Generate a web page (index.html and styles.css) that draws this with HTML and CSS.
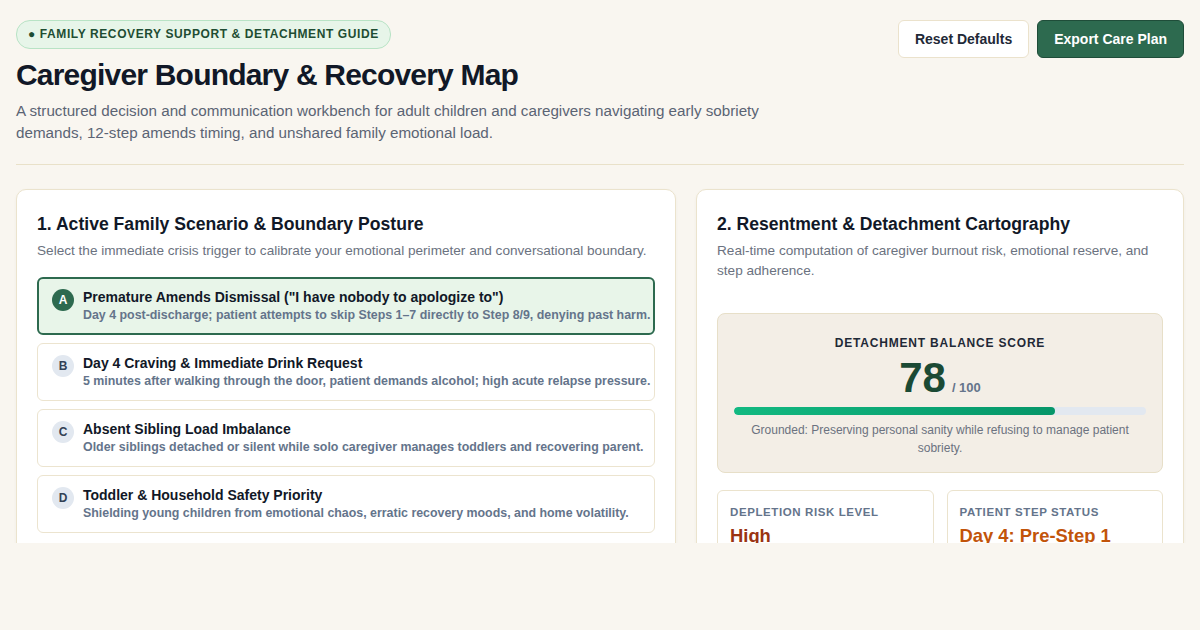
FILE: index.html
```html
<!DOCTYPE html>
<html lang="en">
<head>
<meta charset="utf-8">
<title>Caregiver Boundary & Recovery Map</title>
<link rel="stylesheet" href="styles.css">
</head>
<body>
<div class="page">
  <header class="header">
    <div class="header-main">
      <span class="badge">● FAMILY RECOVERY SUPPORT &amp; DETACHMENT GUIDE</span>
      <h1 class="title">Caregiver Boundary &amp; Recovery Map</h1>
      <p class="lede">A structured decision and communication workbench for adult children and caregivers navigating early sobriety demands, 12-step amends timing, and unshared family emotional load.</p>
    </div>
    <div class="actions">
      <button class="btn btn-light">Reset Defaults</button>
      <button class="btn btn-dark">Export Care Plan</button>
    </div>
  </header>

  <main class="grid">
    <section class="card">
      <h2 class="card-title">1. Active Family Scenario &amp; Boundary Posture</h2>
      <p class="card-sub">Select the immediate crisis trigger to calibrate your emotional perimeter and conversational boundary.</p>
      <div class="options">
        <div class="option selected">
          <span class="letter">A</span>
          <div class="opt-text">
            <div class="opt-title">Premature Amends Dismissal ("I have nobody to apologize to")</div>
            <div class="opt-desc">Day 4 post-discharge; patient attempts to skip Steps 1–7 directly to Step 8/9, denying past harm.</div>
          </div>
        </div>
        <div class="option">
          <span class="letter">B</span>
          <div class="opt-text">
            <div class="opt-title">Day 4 Craving &amp; Immediate Drink Request</div>
            <div class="opt-desc">5 minutes after walking through the door, patient demands alcohol; high acute relapse pressure.</div>
          </div>
        </div>
        <div class="option">
          <span class="letter">C</span>
          <div class="opt-text">
            <div class="opt-title">Absent Sibling Load Imbalance</div>
            <div class="opt-desc">Older siblings detached or silent while solo caregiver manages toddlers and recovering parent.</div>
          </div>
        </div>
        <div class="option">
          <span class="letter">D</span>
          <div class="opt-text">
            <div class="opt-title">Toddler &amp; Household Safety Priority</div>
            <div class="opt-desc">Shielding young children from emotional chaos, erratic recovery moods, and home volatility.</div>
          </div>
        </div>
      </div>
    </section>

    <section class="card">
      <h2 class="card-title">2. Resentment &amp; Detachment Cartography</h2>
      <p class="card-sub card-sub-wide">Real-time computation of caregiver burnout risk, emotional reserve, and step adherence.</p>
      <div class="score-box">
        <div class="score-label">DETACHMENT BALANCE SCORE</div>
        <div class="score-row"><span class="score-num">78</span><span class="score-max">/ 100</span></div>
        <div class="bar"><div class="bar-fill" style="width:78%"></div></div>
        <p class="score-note">Grounded: Preserving personal sanity while refusing to manage patient sobriety.</p>
      </div>
      <div class="stats">
        <div class="stat">
          <div class="stat-label">DEPLETION RISK LEVEL</div>
          <div class="stat-value risk">High</div>
        </div>
        <div class="stat">
          <div class="stat-label">PATIENT STEP STATUS</div>
          <div class="stat-value step">Day 4: Pre-Step 1</div>
        </div>
      </div>
    </section>
  </main>
</div>
</body>
</html>
```

FILE: styles.css
```css
* { box-sizing: border-box; }
html, body { margin: 0; padding: 0; }
body {
  background: #f9f6f0;
  font-family: "Liberation Sans", Arial, sans-serif;
  color: #111827;
}
.page {
  padding: 20px 16px 0;
  height: 543px;
  overflow: hidden;
}
.header {
  display: flex;
  justify-content: space-between;
  align-items: flex-start;
  padding-bottom: 20px;
  border-bottom: 1px solid #e9e1c9;
}
.header-main { max-width: 790px; }
.badge {
  display: inline-block;
  background: #e7f5e9;
  border: 1px solid #b8e3c5;
  color: #1e4d33;
  font-size: 12px;
  font-weight: 700;
  letter-spacing: 0.6px;
  padding: 6px 11px 7px 11px;
  border-radius: 14px;
  line-height: 14px;
}
.title {
  margin: 8px 0 7px;
  font-size: 30px;
  line-height: 36px;
  font-weight: 700;
  letter-spacing: -0.8px;
  color: #111827;
}
.lede {
  margin: 0;
  font-size: 15.2px;
  line-height: 22px;
  color: #5b6474;
}
.actions { display: flex; gap: 8px; }
.btn {
  font-family: inherit;
  font-size: 14px;
  font-weight: 700;
  height: 38px;
  padding: 0 16px;
  border-radius: 6px;
  cursor: pointer;
}
.btn-light {
  background: #ffffff;
  border: 1px solid #ebe2cc;
  color: #1f2937;
}
.btn-dark {
  background: #2d6a4f;
  border: 1px solid #1f4d39;
  color: #ffffff;
}
.grid {
  display: grid;
  grid-template-columns: 660px 1fr;
  gap: 20px;
  margin-top: 24px;
}
.card {
  background: #ffffff;
  border: 1px solid #ebe3cd;
  border-radius: 10px;
  padding: 22px 20px 20px;
  box-shadow: 0 1px 3px rgba(120, 100, 60, 0.06);
}
.card-title {
  margin: 0;
  font-size: 17.6px;
  line-height: 24px;
  font-weight: 700;
  color: #111827;
}
.card-sub {
  margin: 5px 0 16px;
  font-size: 13.6px;
  line-height: 20px;
  color: #6b7280;
}
.card-sub-wide { margin-bottom: 32px; }
.options { display: flex; flex-direction: column; gap: 8px; }
.option {
  display: flex;
  align-items: flex-start;
  gap: 9px;
  border: 1px solid #ece4cf;
  border-radius: 6px;
  padding: 10px 2px 10px 14px;
  background: #ffffff;
}
.option.selected {
  background: #e8f5e9;
  border: 2px solid #2d6a4f;
  padding: 9px 1px 9px 13px;
}
.letter {
  flex: none;
  width: 22px;
  height: 22px;
  border-radius: 50%;
  background: #e2e8f0;
  color: #334155;
  font-size: 12px;
  font-weight: 700;
  display: flex;
  align-items: center;
  justify-content: center;
  margin-top: 1px;
}
.selected .letter { background: #2d6a4f; color: #ffffff; }
.opt-text { min-width: 0; }
.opt-title {
  font-size: 14px;
  line-height: 18px;
  font-weight: 700;
  color: #111827;
  white-space: nowrap;
}
.opt-desc {
  font-size: 12.4px;
  line-height: 18px;
  font-weight: 700;
  color: #64748b;
  white-space: nowrap;
}
.score-box {
  background: #f3eee6;
  border: 1px solid #e7dfc8;
  border-radius: 8px;
  padding: 22px 16px 15px;
  text-align: center;
}
.score-label {
  font-size: 12px;
  line-height: 14px;
  font-weight: 700;
  letter-spacing: 0.8px;
  color: #1f2937;
}
.score-row {
  display: flex;
  justify-content: center;
  align-items: baseline;
  gap: 6px;
  margin-top: 4px;
}
.score-num {
  font-size: 42px;
  line-height: 48px;
  font-weight: 700;
  color: #1b4a34;
}
.score-max {
  font-size: 13px;
  font-weight: 700;
  color: #64748b;
}
.bar {
  height: 8px;
  border-radius: 4px;
  background: #e2e8f0;
  margin-top: 5px;
  overflow: hidden;
}
.bar-fill {
  height: 100%;
  border-radius: 4px;
  background: linear-gradient(90deg, #12b981, #059669);
}
.score-note {
  margin: 6px 0 0;
  font-size: 12px;
  line-height: 18px;
  color: #6b7280;
}
.stats {
  display: grid;
  grid-template-columns: 1fr 1fr;
  gap: 13px;
  margin-top: 17px;
}
.stat {
  border: 1px solid #ebe3cd;
  border-radius: 6px;
  padding: 14px 12px;
  background: #ffffff;
}
.stat-label {
  font-size: 11.5px;
  line-height: 14px;
  font-weight: 700;
  letter-spacing: 0.6px;
  color: #64748b;
}
.stat-value {
  margin-top: 5px;
  font-size: 18.4px;
  line-height: 24px;
  font-weight: 700;
}
.risk { color: #9a3412; }
.step { color: #c2540a; }
```
